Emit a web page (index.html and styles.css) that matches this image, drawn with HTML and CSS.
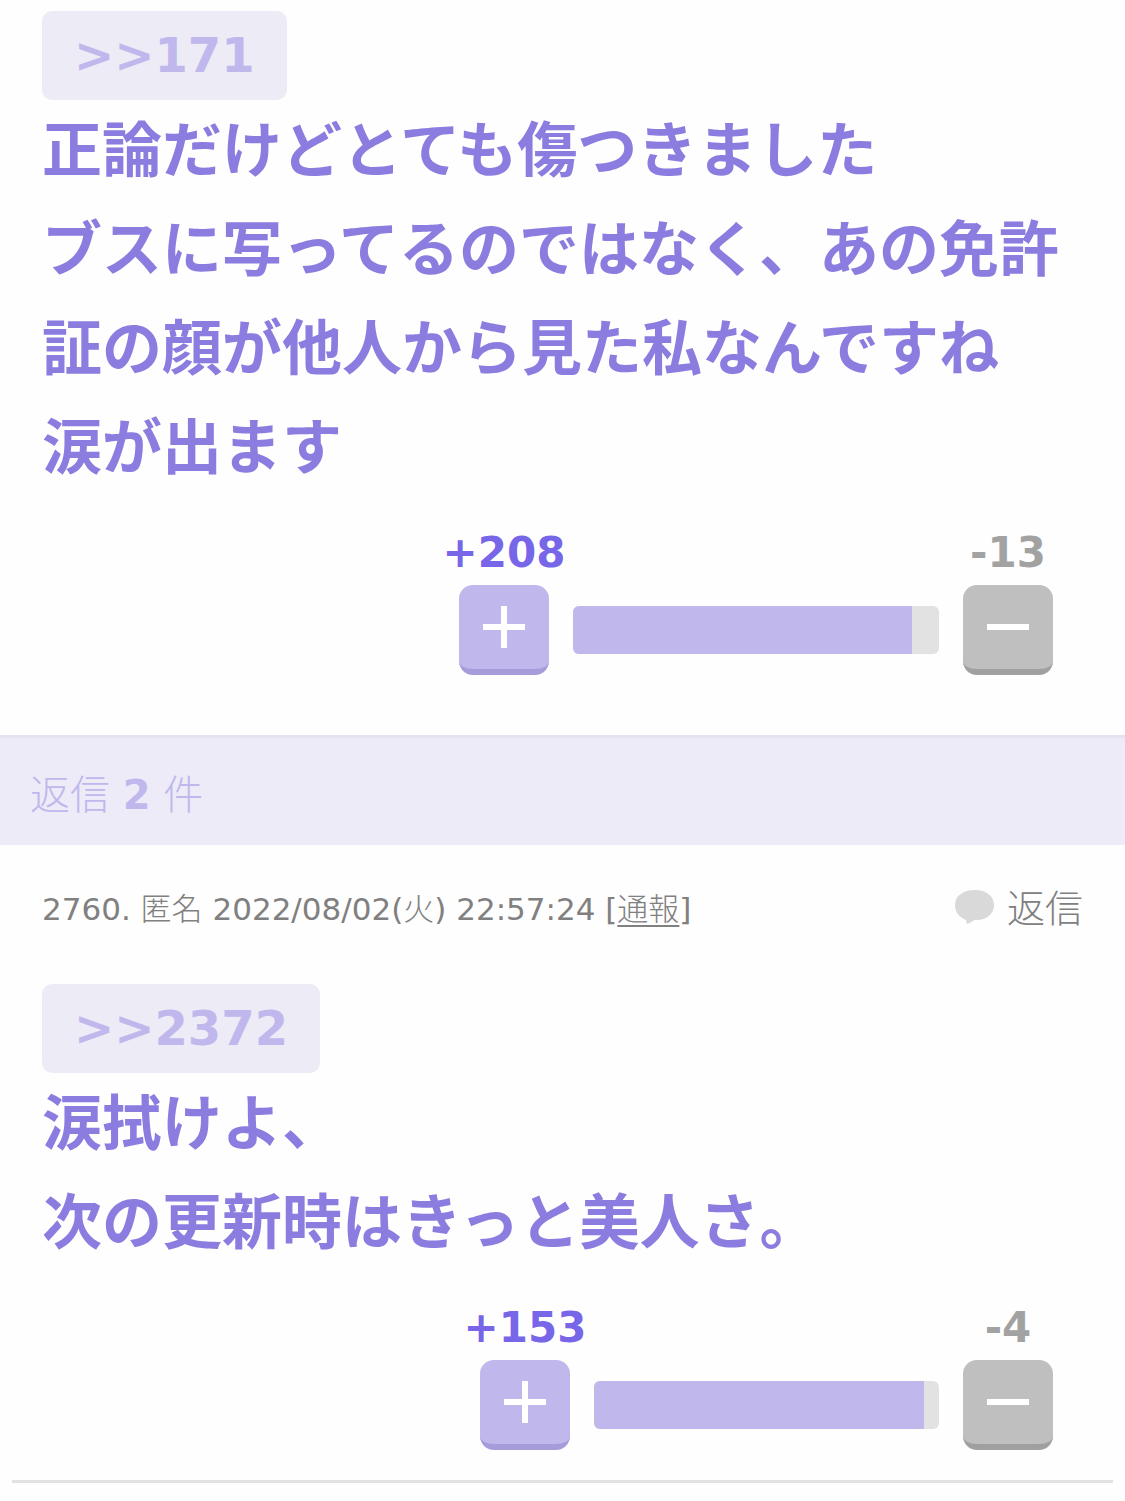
FILE: index.html
```html
<!DOCTYPE html>
<html lang="ja">
<head>
<meta charset="utf-8">
<meta name="viewport" content="width=device-width, initial-scale=1">
<title>返信</title>
<link rel="stylesheet" href="styles.css">
</head>
<body>
<main>
  <article class="comment">
    <a class="anchor" href="#c171">&gt;&gt;171</a>
    <p class="body">正論だけどとても傷つきました<br>ブスに写ってるのではなく、あの免許証の顔が他人から見た私なんですね<br>涙が出ます</p>
    <div class="votes">
      <div class="vote plus">
        <span class="count">+208</span>
        <button class="key" type="button" aria-label="プラス"><svg viewBox="0 0 42 42"><path d="M21 0V42M0 21H42"/></svg></button>
      </div>
      <div class="meter"><div class="fill" style="width:92.6%"></div></div>
      <div class="vote minus">
        <span class="count">-13</span>
        <button class="key" type="button" aria-label="マイナス"><svg viewBox="0 0 42 42"><path d="M0 21H42"/></svg></button>
      </div>
    </div>
  </article>
  <h2 class="replies">返信 <b>2</b> 件</h2>
  <article class="comment reply">
    <header class="meta">
      <span>2760. <span class="light">匿名</span> 2022/08/02(<span class="light">火</span>) 22:57:24 [<a class="light" href="#report">通報</a>]</span>
      <a class="respond" href="#respond"><svg viewBox="0 0 40 34"><path d="M20 0C8 0 0 6 0 15c0 7 4 12 11 15l1 4c3-1 5-2 7-4 12 1 20-6 20-15C39 6 31 0 20 0Z"/></svg>返信</a>
    </header>
    <a class="anchor" href="#c2372">&gt;&gt;2372</a>
    <p class="body">涙拭けよ、<br>次の更新時はきっと美人さ。</p>
    <div class="votes short">
      <div class="vote plus">
        <span class="count">+153</span>
        <button class="key" type="button" aria-label="プラス"><svg viewBox="0 0 42 42"><path d="M21 0V42M0 21H42"/></svg></button>
      </div>
      <div class="meter"><div class="fill" style="width:95.7%"></div></div>
      <div class="vote minus">
        <span class="count">-4</span>
        <button class="key" type="button" aria-label="マイナス"><svg viewBox="0 0 42 42"><path d="M0 21H42"/></svg></button>
      </div>
    </div>
  </article>
  <hr class="rule">
</main>
</body>
</html>
```

FILE: styles.css
```css
* { box-sizing: border-box; }
body {
  margin: 0;
  background: #fefefe;
  color: #808080;
  font-family: "DejaVu Sans", "Noto Sans CJK JP", sans-serif;
}
a { color: inherit; }
.comment { padding: 11px 42px 60px; }
.anchor {
  display: block;
  width: fit-content;
  padding: 0 32px;
  border-radius: 10px;
  background: #edebf6;
  color: #c0b8ed;
  font-size: 48px;
  font-weight: bold;
  line-height: 89px;
  text-decoration: none;
}
.body {
  margin: -4px 0 0;
  color: #8b7de0;
  font-family: "Noto Sans CJK JP", sans-serif;
  font-size: 60px;
  font-weight: bold;
  line-height: 99px;
}
.votes {
  display: flex;
  align-items: flex-end;
  justify-content: flex-end;
  gap: 24px;
  margin: 29px 30px 0 0;
}
.vote {
  display: flex;
  flex-direction: column;
  align-items: center;
  width: 90px;
}
.count {
  font-size: 42px;
  font-weight: bold;
  line-height: 64px;
  white-space: nowrap;
}
.plus .count { color: #7866e8; }
.minus .count { color: #a2a2a2; }
.key {
  display: flex;
  align-items: center;
  justify-content: center;
  width: 90px;
  height: 90px;
  padding: 0;
  border: 0;
  border-bottom: 6px solid #a79bd9;
  border-radius: 14px;
  background: #c0b7ed;
}
.minus .key { border-color: #a0a0a0; background: #bfbfbf; }
.key svg { width: 42px; height: 42px; fill: none; stroke: #fff; stroke-width: 6; }
.meter {
  width: 366px;
  height: 48px;
  margin-bottom: 21px;
  border-radius: 6px;
  background: #e2e2e2;
  overflow: hidden;
}
.short .meter { width: 345px; }
.fill { height: 100%; background: #c0b7ed; }
.replies {
  margin: 0;
  padding: 8px 30px 0;
  border-top: 3px solid #e4e2ee;
  background: #edebf7;
  color: #c0b8ed;
  font-size: 40px;
  font-weight: 300;
  line-height: 99px;
}
.replies b { font-weight: 700; }
.reply { padding-top: 40px; padding-bottom: 30px; }
.meta {
  display: flex;
  align-items: center;
  justify-content: space-between;
  margin-bottom: 50px;
  font-size: 31px;
  line-height: 49px;
}
.light { font-weight: 300; text-underline-offset: 5px; text-decoration-thickness: 2px; }
.respond {
  display: flex;
  align-items: center;
  gap: 12px;
  font-size: 38px;
  font-weight: 300;
  text-decoration: none;
}
.respond svg { width: 40px; height: 34px; margin-bottom: 6px; fill: #d9d9d9; }
.rule { margin: 0 12px 18px; border: 0; border-top: 3px solid #e2e2e2; }
```
